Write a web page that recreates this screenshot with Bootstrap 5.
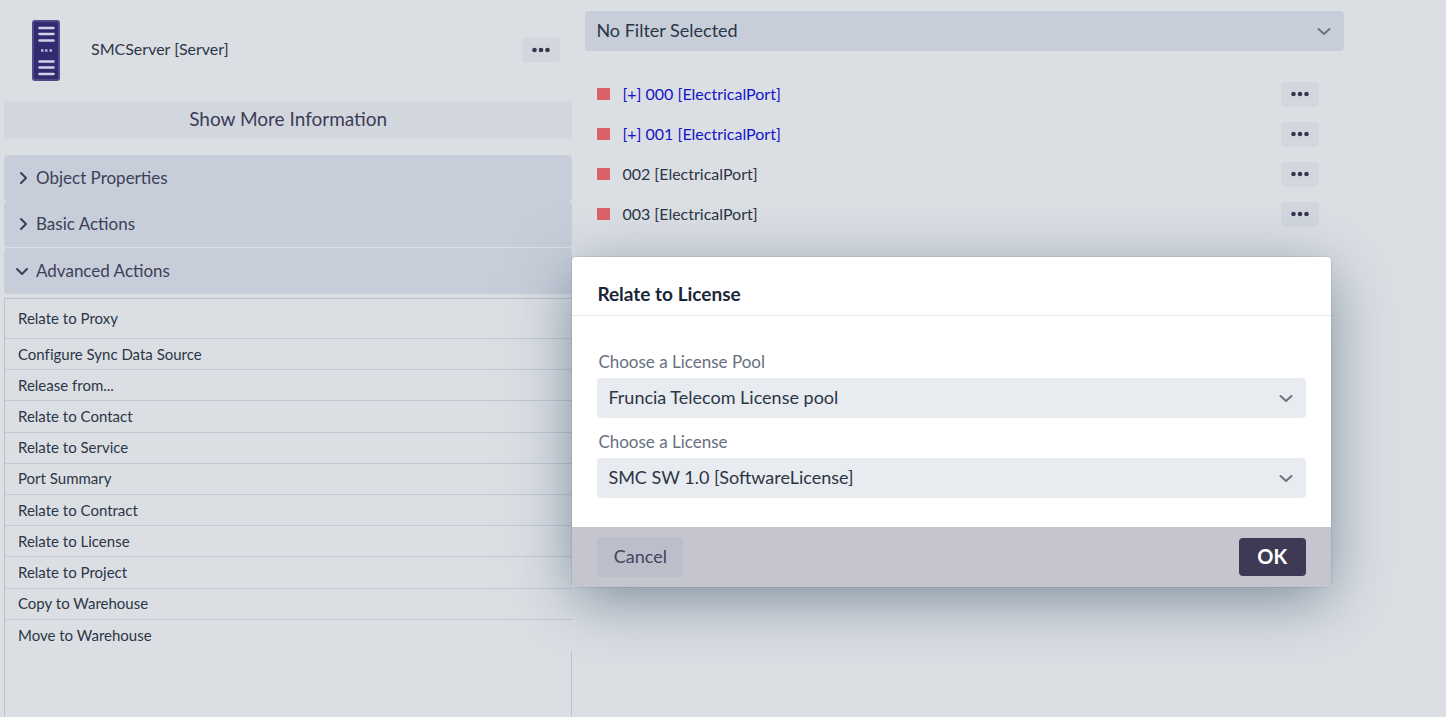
<!DOCTYPE html>
<html lang="en">
<head>
<meta charset="utf-8">
<meta name="viewport" content="width=device-width, initial-scale=1">
<title>Relate to License</title>
<link rel="stylesheet" href="https://cdn.jsdelivr.net/npm/bootstrap@5.3.0/dist/css/bootstrap.min.css">
<style>
  body { font-family: Lato, "Open Sans", sans-serif; font-variant-ligatures: none; background: #dbdfe4; color: #2b3647; font-size: 15px; line-height: 20px; }
  :root { --side-width: calc(40% - 6px); --main-width: calc(53% - 8px); }
  .workspace { min-height: 100vh; }
  .side-pane { flex: 0 0 var(--side-width); padding-left: 4px; }
  .main-pane { flex: 0 0 var(--main-width); margin-left: 13px; padding-top: 11px; }
  .object-head { height: 101px; padding: 0 12px 2px 24px; }
  .object-name { font-size: 16px; margin-left: 27px; padding-bottom: 2px; }
  .server-icon { width: 36px; height: 64px; }
  .btn-more { width: 38px; height: 25px; padding: 0; background: #d2d7de; border: 0; border-radius: 4px; display: flex; align-items: center; justify-content: center; flex: none; }
  .btn-info-wide { height: 38px; background: #d2d7de; border: 0; border-radius: 4px; color: #3d3b58; font-size: 19px; padding: 0 0 2px; }
  .section-btn { display: flex; align-items: center; height: 46px; border: 0; border-radius: 4px; background: #c7ced9; color: #3d3f58; font-size: 17px; padding: 0 12px; gap: 7px; text-align: left; }
  .section-open { margin-top: 1px; }
  .action-list { display: grid; grid-template-rows: 40px; grid-auto-rows: 1fr; min-height: 353px; border: 1px solid #bbc1cb; border-width: 1px 0 0 1px; }
  .action-list a { display: flex; align-items: center; height: 100%; padding: 0 0 1px 13px; color: #2b3647; text-decoration: none; border-bottom: 1px solid #c3c8d1; }
  .action-list li:last-child a { border: 0; }
  .list-rest { border: 1px solid #bbc1cb; border-width: 0 1px; min-height: 32px; }
  .form-select { height: 40px; border: 0; border-radius: 4px; font-size: 18px; padding: 0 36px 2px 11px; color: #2b3647; background-color: #e8ebef;
    background-position: right 12px center; background-size: 16px 16px;
    background-image: url("data:image/svg+xml,%3csvg xmlns='http://www.w3.org/2000/svg' viewBox='0 0 16 16'%3e%3cpath fill='none' stroke='%236c757f' stroke-width='2' stroke-linecap='round' stroke-linejoin='round' d='M2.500 6 8 11l5.500-5'/%3e%3c/svg%3e"); }
  .filter-select { background-color: #c7ced9; }
  .port-list { margin-top: 23px; padding: 0 25px 0 12px; }
  .port-row { height: 40px; font-size: 16px; }
  .port-row a { color: #1414c8; text-decoration: none; }
  .port-mark { width: 13px; height: 12px; background: #dc6166; margin-right: 12px; flex: none; }
  .dialog-box { position: absolute; left: var(--side-width); top: 257px; width: var(--main-width); background: #fff; border-radius: 4px; box-shadow: 0 0 0 1px rgba(70,85,110,.12), 0 14px 58px -4px rgba(52,76,100,.6); }
  .dialog-title { font-size: 19px; font-weight: 700; line-height: 24px; color: #1a2636; padding: 25px 25px 9px; border-bottom: 1px solid #e4e7ea; }
  .dialog-main { padding: 34px 25px 29px; }
  .dialog-main label { font-size: 17px; line-height: 24px; margin-bottom: 4px; padding-left: 1px; color: #667080; }
  .dialog-main .form-select { margin-bottom: 12px; }
  .dialog-main .form-select:last-child { margin-bottom: 0; }
  .dialog-foot { height: 60px; padding: 0 25px; background: #c5c5cf; border-radius: 0 0 4px 4px; }
  .btn-cancel { width: 86px; height: 40px; padding: 0 0 2px; border: 0; border-radius: 4px; background: #bcbfca; color: #45425c; font-size: 18px; }
  .btn-ok { width: 67px; height: 38px; padding: 0 0 2px; border: 0; border-radius: 4px; background: #3e3954; color: #fff; font-size: 20px; font-weight: 700; }
</style>
</head>
<body>
<svg class="d-none">
  <symbol id="dots" viewBox="0 0 18 6"><circle cx="2.500" cy="3" r="2.300"/><circle cx="9" cy="3" r="2.300"/><circle cx="15.500" cy="3" r="2.300"/></symbol>
  <symbol id="right" viewBox="0 0 16 16"><path d="M5 3l5 5-5 5" fill="none" stroke="currentColor" stroke-width="2" stroke-linecap="round" stroke-linejoin="round"/></symbol>
  <symbol id="down" viewBox="0 0 16 16"><path d="M1 6l5 5 5-5" fill="none" stroke="currentColor" stroke-width="2" stroke-linecap="round" stroke-linejoin="round"/></symbol>
</svg>
<div class="workspace d-flex position-relative">
  <aside class="side-pane d-flex flex-column">
    <div class="object-head d-flex align-items-center">
      <svg class="server-icon" viewBox="0 0 36 64" aria-hidden="true">
        <rect x="5" y="3" width="26" height="59" rx="2" fill="#312b70" stroke="#4f4a88" stroke-width="2"/>
        <path d="M11.500 10h14M11.500 16h14M11.500 22.500h14M11.500 43.500h14M11.500 49.500h14M11.500 56h14" stroke="#cfd2e8" stroke-width="2.500" stroke-linecap="round"/>
        <path d="M13 32.500h2.500M17 32.500h2.500M21.500 32.500h2.500" stroke="#b6b8d6" stroke-width="2.500"/>
      </svg>
      <span class="object-name">SMCServer [Server]</span>
      <button class="btn btn-more ms-auto" type="button" aria-label="More actions"><svg width="18" height="6" fill="#33364d"><use href="#dots"/></svg></button>
    </div>
    <button class="btn btn-info-wide w-100" type="button">Show More Information</button>
    <div class="mt-3 pb-1 d-flex flex-column">
      <button class="section-btn" type="button" aria-expanded="false"><svg width="13" height="16" viewBox="0 0 13 16"><use href="#right" width="16" height="16"/></svg>Object Properties</button>
      <button class="section-btn" type="button" aria-expanded="false"><svg width="13" height="16" viewBox="0 0 13 16"><use href="#right" width="16" height="16"/></svg>Basic Actions</button>
      <button class="section-btn section-open" type="button" aria-expanded="true"><svg width="13" height="16" viewBox="0 0 13 16"><use href="#down" width="16" height="16"/></svg>Advanced Actions</button>
    </div>
    <ul class="action-list list-unstyled mb-0">
      <li><a href="#">Relate to Proxy</a></li>
      <li><a href="#">Configure Sync Data Source</a></li>
      <li><a href="#">Release from...</a></li>
      <li><a href="#">Relate to Contact</a></li>
      <li><a href="#">Relate to Service</a></li>
      <li><a href="#">Port Summary</a></li>
      <li><a href="#">Relate to Contract</a></li>
      <li><a href="#">Relate to License</a></li>
      <li><a href="#">Relate to Project</a></li>
      <li><a href="#">Copy to Warehouse</a></li>
      <li><a href="#">Move to Warehouse</a></li>
    </ul>
    <div class="list-rest flex-grow-1"></div>
  </aside>
  <main class="main-pane">
    <select class="form-select filter-select" aria-label="Filter"><option>No Filter Selected</option></select>
    <div class="port-list">
      <div class="port-row d-flex align-items-center"><span class="port-mark"></span><a href="#">[+] 000 [ElectricalPort]</a><button class="btn btn-more ms-auto" type="button" aria-label="More actions"><svg width="18" height="6" fill="#33364d"><use href="#dots"/></svg></button></div>
      <div class="port-row d-flex align-items-center"><span class="port-mark"></span><a href="#">[+] 001 [ElectricalPort]</a><button class="btn btn-more ms-auto" type="button" aria-label="More actions"><svg width="18" height="6" fill="#33364d"><use href="#dots"/></svg></button></div>
      <div class="port-row d-flex align-items-center"><span class="port-mark"></span><span>002 [ElectricalPort]</span><button class="btn btn-more ms-auto" type="button" aria-label="More actions"><svg width="18" height="6" fill="#33364d"><use href="#dots"/></svg></button></div>
      <div class="port-row d-flex align-items-center"><span class="port-mark"></span><span>003 [ElectricalPort]</span><button class="btn btn-more ms-auto" type="button" aria-label="More actions"><svg width="18" height="6" fill="#33364d"><use href="#dots"/></svg></button></div>
    </div>
  </main>
  <form class="dialog-box" role="dialog" aria-labelledby="dialogTitle">
    <h2 class="dialog-title mb-0" id="dialogTitle">Relate to License</h2>
    <div class="dialog-main">
      <label class="d-block" for="pool">Choose a License Pool</label>
      <select class="form-select" id="pool"><option>Fruncia Telecom License pool</option></select>
      <label class="d-block" for="license">Choose a License</label>
      <select class="form-select" id="license"><option>SMC SW 1.0 [SoftwareLicense]</option></select>
    </div>
    <div class="dialog-foot d-flex align-items-center justify-content-between">
      <button class="btn btn-cancel" type="button">Cancel</button>
      <button class="btn btn-ok" type="submit">OK</button>
    </div>
  </form>
</div>
<script src="https://cdn.jsdelivr.net/npm/bootstrap@5.3.0/dist/js/bootstrap.bundle.min.js"></script>
</body>
</html>
